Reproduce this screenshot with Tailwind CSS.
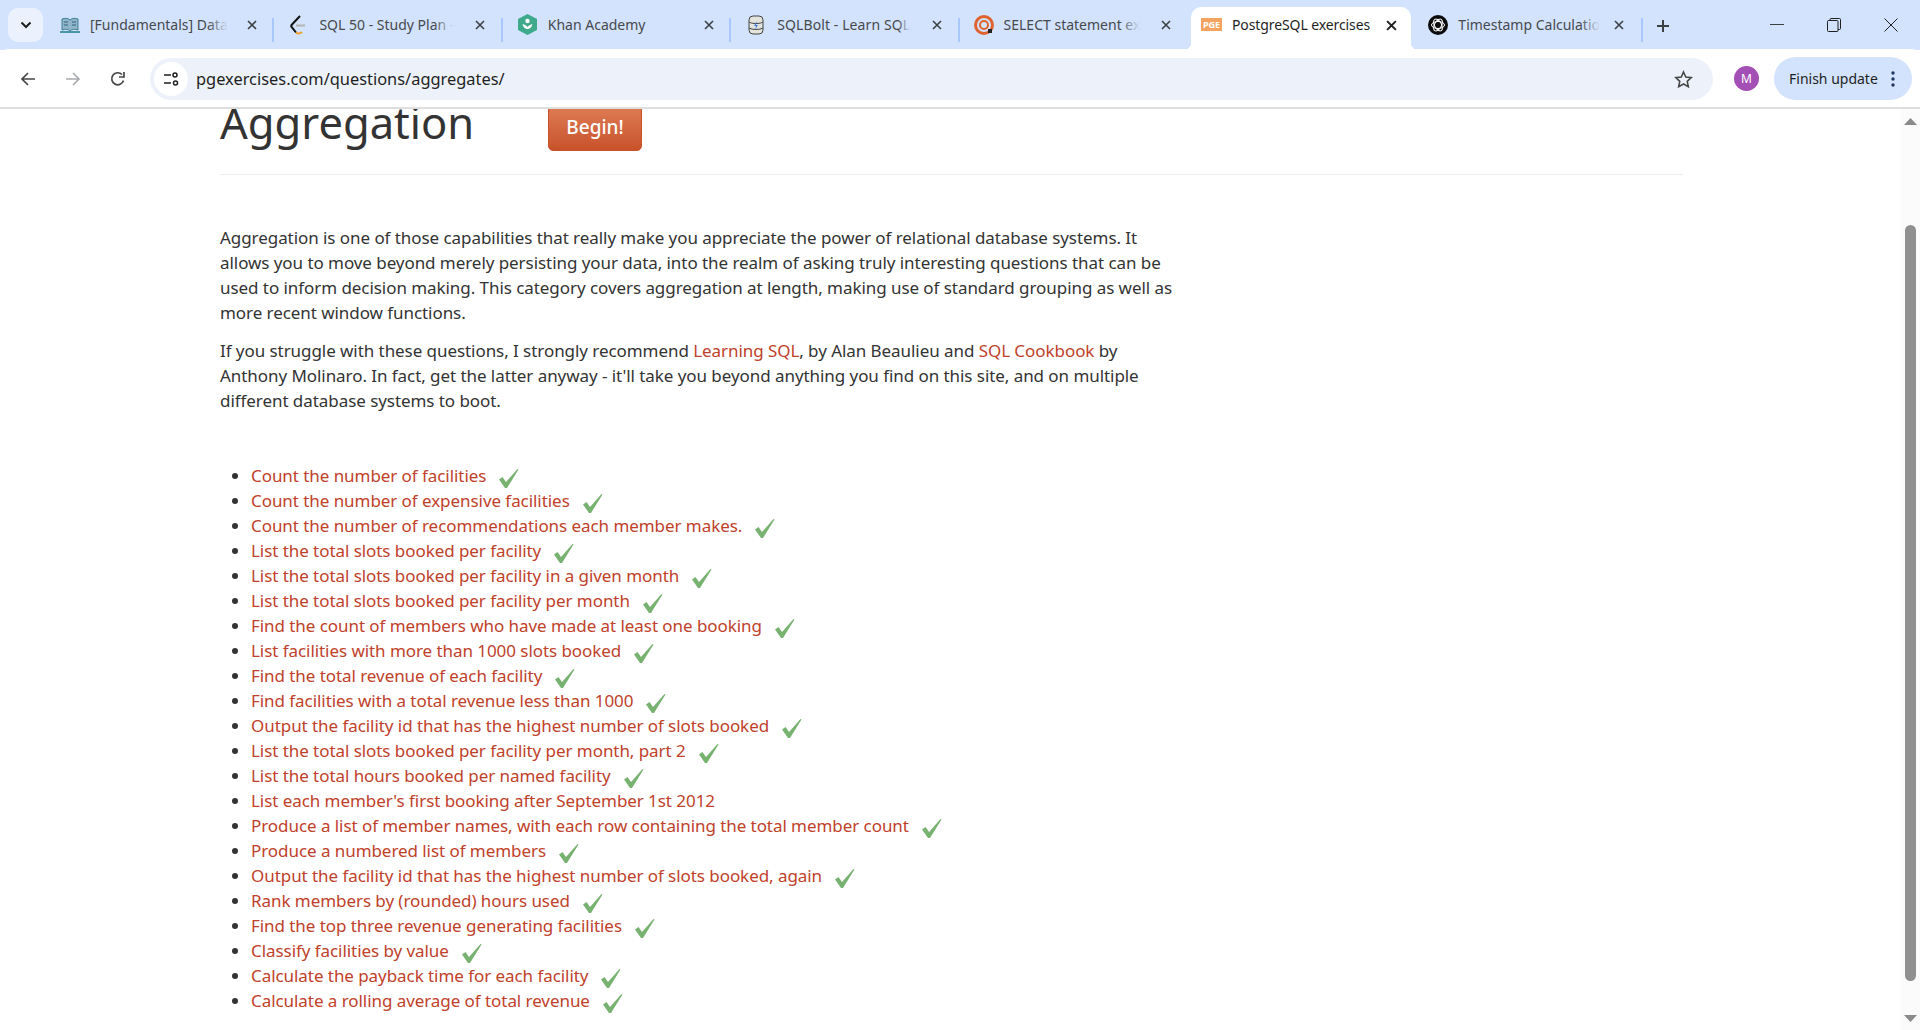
<!DOCTYPE html>
<html lang="en">
<head>
  <meta charset="UTF-8" />
  <title>PostgreSQL exercises</title>
  <script src="https://cdn.jsdelivr.net/npm/@tailwindcss/browser@4"></script>
</head>
<body class="bg-white w-[1920px] h-[1030px] overflow-hidden flex flex-col font-['Noto_Sans',sans-serif] text-[#333]">

  <!-- tab strip -->
  <div class="h-[50px] bg-[#d3e3fd] flex items-start shrink-0 relative">
    <div class="ml-2 mt-2 w-[35px] h-[34px] rounded-[10px] bg-[#ecf2fd] flex items-center justify-center mr-[3px]">
      <svg width="12" height="8" viewBox="0 0 12 8" fill="none" stroke="#1f1f1f" stroke-width="2"><path d="M1.5 1.5 6 6l4.5-4.5"/></svg>
    </div>

    <div class="w-[228.4px] h-[50px] flex items-center relative text-[14px] text-[#47494d] pb-[1px]">
      <svg class="ml-[14px] mr-[10px] shrink-0" width="20" height="20" viewBox="0 0 20 20"><path d="M2 4c3-1 6-1 8 1 2-2 5-2 8-1v11c-3-1-6-1-8 1-2-2-5-2-8-1z" fill="#8fb4c9" stroke="#3f7f95"/><path d="M4 7h4M4 10h4M12 7h4M12 10h4" stroke="#2f6478"/><rect x="0" y="16" width="20" height="2" fill="#4a96a8"/></svg>
      <div class="whitespace-nowrap relative">[Fundamentals] Data<span class="absolute right-0 top-0 h-full w-5 bg-gradient-to-r from-[#d3e3fd]/0 to-[#d3e3fd]"></span></div>
      <span class="absolute left-[201px]"><svg width="10" height="10" viewBox="0 0 10 10" stroke="#3c4043" stroke-width="1.6"><path d="m1 1 8 8M9 1 1 9"/></svg></span>
      <span class="absolute right-0 top-[18px] w-[2px] h-[24px] bg-[#a8c7fa]"></span>
    </div>

    <div class="w-[228.4px] h-[50px] flex items-center relative text-[14px] text-[#47494d] pb-[1px]">
      <svg class="ml-[16px] mr-[13px] shrink-0" width="16" height="20" viewBox="0 0 16 20" fill="none"><path d="M10 1 2 9.5c-1 1-1 2 0 3l4 5" stroke="#111" stroke-width="2"/><path d="M6 10.5h9" stroke="#b3b3b3" stroke-width="2"/><path d="M6 17.5c2 1.5 4 1.2 6-.5" stroke="#f0a030" stroke-width="2"/></svg>
      <div class="whitespace-nowrap relative">SQL 50 - Study Plan -<span class="absolute right-0 top-0 h-full w-5 bg-gradient-to-r from-[#d3e3fd]/0 to-[#d3e3fd]"></span></div>
      <span class="absolute left-[201px]"><svg width="10" height="10" viewBox="0 0 10 10" stroke="#3c4043" stroke-width="1.6"><path d="m1 1 8 8M9 1 1 9"/></svg></span>
      <span class="absolute right-0 top-[18px] w-[2px] h-[24px] bg-[#a8c7fa]"></span>
    </div>

    <div class="w-[228.4px] h-[50px] flex items-center relative text-[14px] text-[#47494d] pb-[1px]">
      <svg class="ml-[15px] mr-[11px] shrink-0" width="19" height="21" viewBox="0 0 19 21"><path d="M9.5 0 19 5v11l-9.5 5L0 16V5z" fill="#3fa98c"/><circle cx="9.5" cy="7" r="2.2" fill="#fff"/><path d="M4.5 10c1 4 3 5 5 5s4-1 5-5c-2 .5-4 1.5-5 3-1-1.5-3-2.500-5-3z" fill="#fff"/></svg>
      <div class="whitespace-nowrap relative">Khan Academy</div>
      <span class="absolute left-[201px]"><svg width="10" height="10" viewBox="0 0 10 10" stroke="#3c4043" stroke-width="1.6"><path d="m1 1 8 8M9 1 1 9"/></svg></span>
      <span class="absolute right-0 top-[18px] w-[2px] h-[24px] bg-[#a8c7fa]"></span>
    </div>

    <div class="w-[228.4px] h-[50px] flex items-center relative text-[14px] text-[#47494d] pb-[1px]">
      <svg class="ml-[17px] mr-[13px] shrink-0" width="16" height="20" viewBox="0 0 16 20"><rect x="1" y="1" width="14" height="18" rx="4" fill="#e4e4df" stroke="#444"/><path d="M1 7c3 2 11 2 14 0M1 13c3 2 11 2 14 0" fill="none" stroke="#444"/><path d="M9 6 6 11h2l-1 4 3-5H8z" fill="#3f7fd8"/></svg>
      <div class="whitespace-nowrap relative tracking-[0.1px]">SQLBolt - Learn SQL<span class="absolute right-0 top-0 h-full w-3 bg-gradient-to-r from-[#d3e3fd]/0 to-[#d3e3fd]"></span></div>
      <span class="absolute left-[201px]"><svg width="10" height="10" viewBox="0 0 10 10" stroke="#3c4043" stroke-width="1.6"><path d="m1 1 8 8M9 1 1 9"/></svg></span>
      <span class="absolute right-0 top-[18px] w-[2px] h-[24px] bg-[#a8c7fa]"></span>
    </div>

    <div class="w-[228.4px] h-[50px] flex items-center relative text-[14px] text-[#47494d] pb-[1px]">
      <svg class="ml-[14px] mr-[10px] shrink-0" width="20" height="20" viewBox="0 0 20 20" fill="none"><circle cx="10" cy="10" r="8.500" stroke="#e0622e" stroke-width="3"/><circle cx="10" cy="10" r="4" stroke="#e0622e" stroke-width="2"/><path d="M14 14h4v4h-4z" fill="#222"/></svg>
      <div class="whitespace-nowrap relative">SELECT statement ex<span class="absolute right-0 top-0 h-full w-5 bg-gradient-to-r from-[#d3e3fd]/0 to-[#d3e3fd]"></span></div>
      <span class="absolute left-[201px]"><svg width="10" height="10" viewBox="0 0 10 10" stroke="#3c4043" stroke-width="1.6"><path d="m1 1 8 8M9 1 1 9"/></svg></span>
    </div>

    <!-- active tab -->
    <div class="w-[228.4px] h-[50px] flex items-center relative text-[14px] text-[#1f1f1f] pb-[1px]">
      <span class="absolute left-[3px] right-[5px] top-[7px] bottom-0 bg-white rounded-t-[10px]"></span>
      <span class="absolute left-[-5px] bottom-0 w-2 h-2 bg-[radial-gradient(circle_at_0_0,#d3e3fd_8px,#fff_8.5px)]"></span>
      <span class="absolute right-[-3px] bottom-0 w-2 h-2 bg-[radial-gradient(circle_at_100%_0,#d3e3fd_8px,#fff_8.5px)]"></span>
      <span class="ml-[13px] mr-[10px] shrink-0 relative w-[21px] h-[13px] bg-[#f4a460] text-white text-[9px] leading-[13px] font-bold text-center">PGE</span>
      <div class="whitespace-nowrap relative tracking-[-0.1px]">PostgreSQL exercises</div>
      <span class="absolute left-[198px] top-[20px]"><svg width="11" height="11" viewBox="0 0 10 10" stroke="#1f1f1f" stroke-width="1.8"><path d="m1 1 8 8M9 1 1 9"/></svg></span>
    </div>

    <div class="w-[228.4px] h-[50px] flex items-center relative text-[14px] text-[#47494d] pb-[1px]">
      <svg class="ml-[12px] mr-[10px] shrink-0" width="20" height="20" viewBox="0 0 20 20" fill="none"><circle cx="10" cy="10" r="10" fill="#0b0b0b"/><g stroke="#fff" stroke-width="1"><ellipse cx="10" cy="10" rx="6.500" ry="3.500"/><ellipse cx="10" cy="10" rx="6.500" ry="3.500" transform="rotate(60 10 10)"/><ellipse cx="10" cy="10" rx="6.500" ry="3.500" transform="rotate(120 10 10)"/></g></svg>
      <div class="whitespace-nowrap relative">Timestamp Calculatio<span class="absolute right-0 top-0 h-full w-5 bg-gradient-to-r from-[#d3e3fd]/0 to-[#d3e3fd]"></span></div>
      <span class="absolute left-[198px]"><svg width="10" height="10" viewBox="0 0 10 10" stroke="#3c4043" stroke-width="1.6"><path d="m1 1 8 8M9 1 1 9"/></svg></span>
      <span class="absolute right-[2px] top-[18px] w-[2px] h-[24px] bg-[#a8c7fa]"></span>
    </div>

    <svg class="mt-[19px] ml-[11px]" width="14" height="14" viewBox="0 0 14 14" stroke="#3c4043" stroke-width="2"><path d="M7 1v12M1 7h12"/></svg>

    <!-- window buttons -->
    <div class="ml-auto flex items-center h-[50px] pb-[1px] pr-[22px] gap-[43px]">
      <svg width="14" height="2" viewBox="0 0 14 2" fill="#3c4043"><rect width="14" height="1"/></svg>
      <svg width="14" height="14" viewBox="0 0 14 14" fill="none" stroke="#1f1f1f"><rect x="0.500" y="2.500" width="10.500" height="11" rx="1"/><path d="M3 2.500V1.500a1 1 0 0 1 1-1h8.500a1 1 0 0 1 1 1v9a1 1 0 0 1-1 1H11"/></svg>
      <svg width="14" height="14" viewBox="0 0 14 14" stroke="#1f1f1f"><path d="m.5.500 13 13M13.500.500l-13 13"/></svg>
    </div>
  </div>

  <!-- toolbar -->
  <div class="h-[60px] bg-white border-b-2 border-[#dedede] rounded-t-[8px] -mt-[1px] shrink-0 flex items-center relative pt-[1px]">
    <div class="ml-[20px] flex items-center gap-[29px]">
      <svg width="16" height="16" viewBox="0 0 16 16" fill="none" stroke="#474747" stroke-width="1.700"><path d="M15 8H2M8 2 2 8l6 6"/></svg>
      <svg width="16" height="16" viewBox="0 0 16 16" fill="none" stroke="#a9abae" stroke-width="1.700"><path d="M1 8h13M8 2l6 6-6 6"/></svg>
      <svg width="16" height="16" viewBox="0 0 16 16" fill="none" stroke="#474747" stroke-width="1.700"><path d="M13.500 9.500A6 6 0 1 1 12 3.500"/><path d="M14 1v5H9" /></svg>
    </div>
    <div class="ml-[24px] w-[1563px] h-[42px] rounded-full bg-[#edf2fa] flex items-center">
      <span class="ml-[4px] w-[34px] h-[34px] rounded-full bg-white flex items-center justify-center">
        <svg width="16" height="16" viewBox="0 0 16 16" fill="none" stroke="#1f1f1f" stroke-width="1.500"><path d="M1 4h7M1 12h7"/><circle cx="12" cy="4" r="2"/><circle cx="12.500" cy="12" r="2"/></svg>
      </span>
      <span class="ml-[8px] mt-[2px] text-[16.4px] text-[#1f1f1f]">pgexercises.com/questions/aggregates/</span>
      <svg class="ml-auto mr-[20px] mt-[1px]" width="19" height="19" viewBox="0 0 24 24" fill="none" stroke="#474747" stroke-width="2"><path d="m12 2.500 2.900 6.300 6.900.8-5.100 4.700 1.400 6.800-6.100-3.400-6.100 3.400 1.400-6.800L2.300 9.600l6.900-.8z"/></svg>
    </div>
    <span class="ml-[21px] w-[25px] h-[25px] rounded-full bg-[#a34fb5] text-white text-[12px] flex items-center justify-center">M</span>
    <div class="ml-[15px] w-[138px] h-[43px] rounded-full bg-[#d3e3fd] flex items-center pl-[15px] text-[14px] text-[#1f1f1f]">
      Finish update
      <svg class="ml-auto mr-[17px]" width="4" height="16" viewBox="0 0 4 16" fill="#1f3760"><circle cx="2" cy="2" r="1.700"/><circle cx="2" cy="8" r="1.700"/><circle cx="2" cy="14" r="1.700"/></svg>
    </div>
  </div>

  <!-- page, scrolled a little -->
  <div class="flex-1 flex overflow-hidden">
    <main class="flex-1 pl-[220px] pr-[218px] overflow-hidden">
      <div class="-mt-[23px] h-[89px] border-b border-[#eeeeee] flex items-start">
        <h1 class="text-[43.5px] leading-[60px] text-[#333] mt-[6px] w-[328px]">Aggregation</h1>
        <a class="mt-[4px] w-[94px] h-[61px] rounded-[5px] bg-gradient-to-b from-[#e58a62] to-[#c8522a] border border-[#c8522a] text-white text-[19px] font-medium flex items-center justify-center pt-[14px]">Begin!</a>
      </div>

      <div class="w-[960px] text-[17px] tracking-[-0.06px] leading-[25px] mt-[50px]">
        <p class="mb-[13px]">Aggregation is one of those capabilities that really make you appreciate the power of relational database systems. It allows you to move beyond merely persisting your data, into the realm of asking truly interesting questions that can be used to inform decision making. This category covers aggregation at length, making use of standard grouping as well as more recent window functions.</p>
        <p>If you struggle with these questions, I strongly recommend <a class="text-[#c0412a]">Learning SQL</a>, by Alan Beaulieu and <a class="text-[#c0412a]">SQL Cookbook</a> by Anthony Molinaro. In fact, get the latter anyway - it'll take you beyond anything you find on this site, and on multiple different database systems to boot.</p>
      </div>

      <ul class="list-disc pl-[31px] mt-[50px] text-[17px] tracking-[-0.06px] leading-[25px] text-[#c0412a] marker:text-[#333]" id="questions"></ul>
    </main>

    <!-- scrollbar -->
    <div class="w-[19px] bg-[#fbfbfb] flex flex-col items-center shrink-0">
      <svg class="mt-[9px]" width="13" height="7" viewBox="0 0 13 7" fill="#8a8a8a"><path d="M6.500 0 13 7H0z"/></svg>
      <div class="mt-[100px] w-[11px] h-[756px] rounded-full bg-[#8f8f8f]"></div>
      <svg class="mt-[34px]" width="13" height="7" viewBox="0 0 13 7" fill="#8a8a8a"><path d="M6.500 7 13 0H0z"/></svg>
    </div>
  </div>

  <script>
    const questions = [
      ["Count the number of facilities", true],
      ["Count the number of expensive facilities", true],
      ["Count the number of recommendations each member makes.", true],
      ["List the total slots booked per facility", true],
      ["List the total slots booked per facility in a given month", true],
      ["List the total slots booked per facility per month", true],
      ["Find the count of members who have made at least one booking", true],
      ["List facilities with more than 1000 slots booked", true],
      ["Find the total revenue of each facility", true],
      ["Find facilities with a total revenue less than 1000", true],
      ["Output the facility id that has the highest number of slots booked", true],
      ["List the total slots booked per facility per month, part 2", true],
      ["List the total hours booked per named facility", true],
      ["List each member's first booking after September 1st 2012", false],
      ["Produce a list of member names, with each row containing the total member count", true],
      ["Produce a numbered list of members", true],
      ["Output the facility id that has the highest number of slots booked, again", true],
      ["Rank members by (rounded) hours used", true],
      ["Find the top three revenue generating facilities", true],
      ["Classify facilities by value", true],
      ["Calculate the payback time for each facility", true],
      ["Calculate a rolling average of total revenue", true],
    ];
    const tick = '<svg class="inline-block ml-[13px] -mb-[2px]" width="20" height="19" viewBox="0 0 20 19" fill="#78b271"><path d="M0 10.500 3.500 8l3.500 5L18.500 0l1 .5L8 19H6z"/></svg>';
    document.getElementById('questions').innerHTML = questions
      .map(([name, done]) => `<li><a>${name}</a>${done ? tick : ''}</li>`)
      .join('');
  </script>
</body>
</html>
